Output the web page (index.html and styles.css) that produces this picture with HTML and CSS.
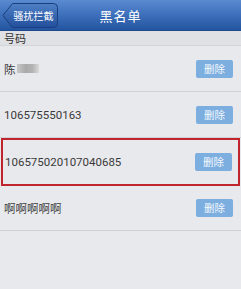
FILE: index.html
```html
<!DOCTYPE html>
<html>
<head>
<meta charset="utf-8">
<link rel="stylesheet" href="styles.css">
</head>
<body>
<div class="header">
  <div class="back">
    <svg class="back-shape" width="56" height="25" viewBox="0 0 56 25">
      <defs>
        <linearGradient id="bg" x1="0" y1="0" x2="0" y2="1">
          <stop offset="0" stop-color="#4f80c6"/>
          <stop offset="1" stop-color="#224f9c"/>
        </linearGradient>
      </defs>
      <path d="M10.5 0.5 H51.5 Q55.5 0.5 55.5 4.5 V20.5 Q55.5 24.5 51.5 24.5 H10.5 L0.8 12.5 Z" fill="url(#bg)" stroke="#1b3f7e" stroke-width="1"/>
    </svg>
    <span class="back-text">骚扰拦截</span>
  </div>
  <div class="title">黑名单</div>
</div>
<div class="section">号码</div>
<div class="list">
  <div class="row">
    <span class="name">陈<span class="blur"></span></span>
    <span class="btn">删除</span>
  </div>
  <div class="row">
    <span class="name">106575550163</span>
    <span class="btn">删除</span>
  </div>
  <div class="row selected">
    <span class="name">106575020107040685</span>
    <span class="btn">删除</span>
  </div>
  <div class="row last">
    <span class="name">啊啊啊啊啊</span>
    <span class="btn">删除</span>
  </div>
</div>
</body>
</html>
```
FILE: styles.css
```css
html, body {
  margin: 0;
  padding: 0;
}
body {
  width: 241px;
  height: 289px;
  background: #e8e9ed;
  font-family: "Roboto", "Noto Sans CJK SC", sans-serif;
  overflow: hidden;
}
.header {
  height: 31px;
  background: linear-gradient(#5a8ad0, #3d6fbb 50%, #23549f);
  position: relative;
  display: flex;
  align-items: center;
  justify-content: center;
  border-bottom: 1px solid #1f4a8e;
  box-sizing: border-box;
}
.back {
  position: absolute;
  left: 2px;
  top: 3px;
  width: 56px;
  height: 25px;
}
.back-shape {
  position: absolute;
  left: 0;
  top: 0;
}
.back-text {
  position: absolute;
  left: 9px;
  right: 2px;
  top: 0;
  line-height: 25px;
  text-align: center;
  color: #fff;
  font-size: 10px;
  white-space: nowrap;
  font-family: "Noto Sans CJK SC", sans-serif;
}
.title {
  color: #fff;
  font-size: 13px;
  font-family: "Noto Sans CJK SC", sans-serif;
  letter-spacing: 1px;
}
.section {
  height: 14px;
  line-height: 14px;
  background: #dfe1e5;
  color: #333;
  font-size: 11px;
  padding-left: 4px;
  border-bottom: 1px solid #d3d5d9;
  font-family: "Noto Sans CJK SC", sans-serif;
}
.row {
  height: 46px;
  display: flex;
  align-items: center;
  justify-content: space-between;
  padding: 0 8px 0 4px;
  border-bottom: 1px solid #cfd1d5;
  box-sizing: border-box;
}
.row.selected {
  border: 2px solid #c0242c;
  margin: 0 1px;
  padding: 0 6px 0 2px;
  height: 48px;
}
.row.last {
  height: 45px;
}
.name {
  font-size: 11.5px;
  color: #3a3a3a;
  display: flex;
  align-items: center;
}
.blur {
  display: inline-block;
  width: 22px;
  height: 9px;
  margin-left: 1px;
  background: linear-gradient(90deg, #c8c8c8, #a9a9a9 40%, #b3b3b3 70%, #d9d9d9);
}
.btn {
  width: 37px;
  height: 18px;
  line-height: 18px;
  text-align: center;
  background: #7caee0;
  color: #f4f8fc;
  font-size: 10.5px;
  border-radius: 2px;
  font-family: "Noto Sans CJK SC", sans-serif;
}
```
